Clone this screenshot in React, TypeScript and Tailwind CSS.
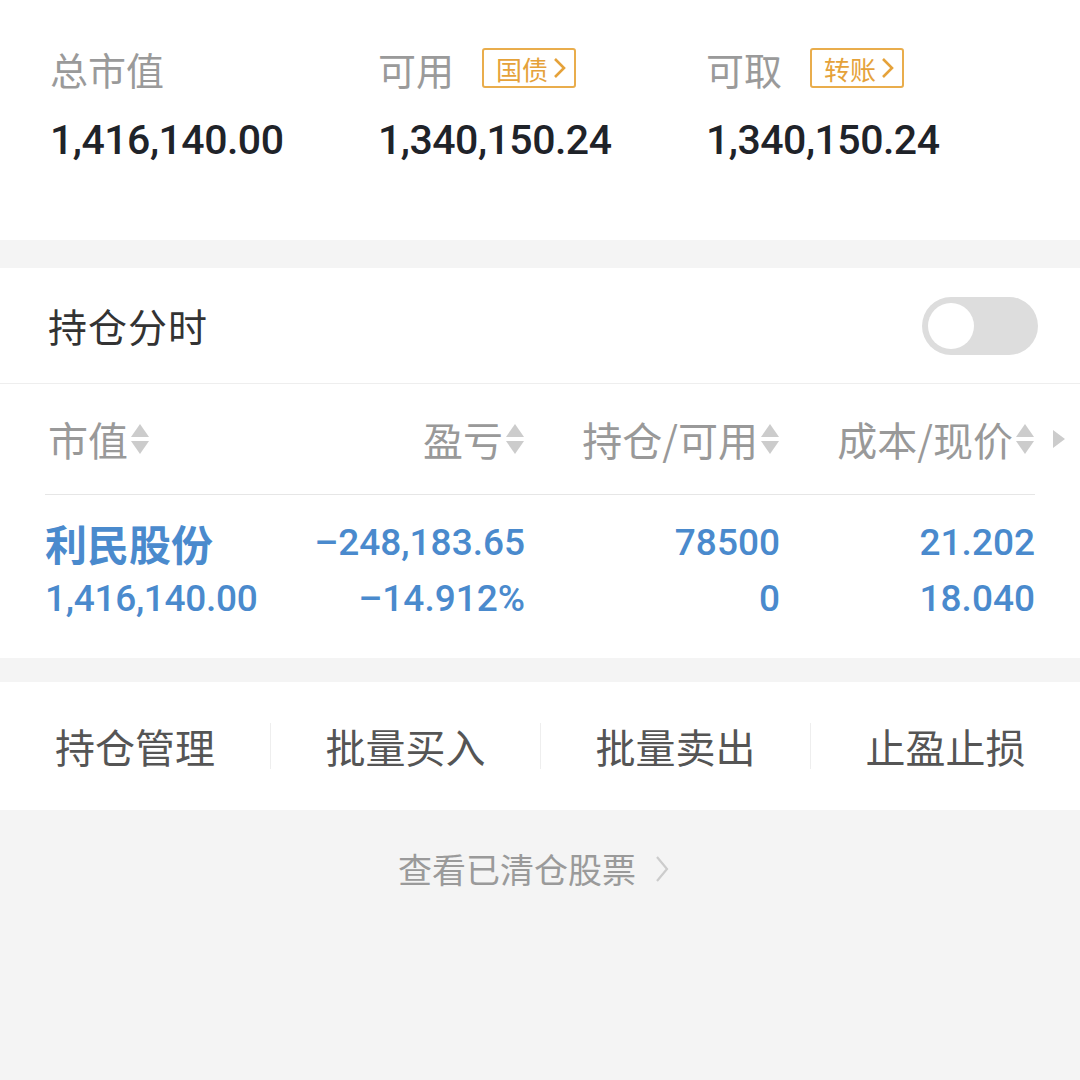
const SortIcon = () => (
  <svg width="20" height="32" viewBox="0 0 20 32" className="ml-[2px]">
    <path d="M10 1 L19 14 L1 14 Z" fill="#cccccc" />
    <path d="M1 18 L19 18 L10 31 Z" fill="#cccccc" />
  </svg>
);

const Badge = ({ text }: { text: string }) => (
  <span className="ml-[28px] inline-flex h-[40px] items-center rounded-[3px] border-2 border-[#e9ad4c] pl-[12px] pr-[6px] text-[26px] text-[#e5a23a]">
    {text}
    <svg width="18" height="24" viewBox="0 0 18 24" className="ml-[2px]">
      <path d="M5 3 L14 12 L5 21" fill="none" stroke="#e5a23a" strokeWidth="2.6" />
    </svg>
  </span>
);

const num = "font-['Roboto',sans-serif]";
const cjk = "font-['Noto_Sans_CJK_SC','Noto_Sans',sans-serif]";

export default function App() {
  const summary = [
    { label: "总市值", value: "1,416,140.00" },
    { label: "可用", value: "1,340,150.24", badge: "国债" },
    { label: "可取", value: "1,340,150.24", badge: "转账" },
  ];

  return (
    <div className={`min-h-[1080px] w-[1080px] bg-[#f4f4f4] ${cjk}`}>
      <section className="flex h-[240px] bg-white pl-[50px] pt-[48px]">
        {summary.map((s) => (
          <div key={s.label} className="w-[328px]">
            <div className="flex h-[40px] items-center text-[38px] text-[#9a9a9a]">
              {s.label}
              {s.badge && <Badge text={s.badge} />}
            </div>
            <div className={`mt-[30px] text-[41px] font-medium leading-[44px] tracking-[-0.5px] text-[#1f2329] ${num}`}>
              {s.value}
            </div>
          </div>
        ))}
      </section>

      <section className="mt-[28px] bg-white">
        <div className="flex h-[116px] items-center justify-between border-b border-[#eeeeee] pl-[48px] pr-[42px]">
          <span className="text-[39px] tracking-[1px] text-[#333333]">持仓分时</span>
          <div className="flex h-[58px] w-[116px] items-center rounded-full bg-[#dddddd] px-[6px]">
            <div className="h-[46px] w-[46px] rounded-full bg-white" />
          </div>
        </div>

        <div className="flex h-[110px] items-center pl-[48px] text-[40px] text-[#999999]">
          <div className="flex w-[240px] items-center">
            市值
            <SortIcon />
          </div>
          <div className="flex w-[237px] items-center justify-end">
            盈亏
            <SortIcon />
          </div>
          <div className="flex w-[255px] items-center justify-end">
            持仓/可用
            <SortIcon />
          </div>
          <div className="flex w-[255px] items-center justify-end">
            成本/现价
            <SortIcon />
          </div>
          <svg width="14" height="20" viewBox="0 0 14 20" className="ml-[17px]">
            <path d="M1 1 L13 10 L1 19 Z" fill="#cccccc" />
          </svg>
        </div>
        <div className="mx-[45px] h-px bg-[#e6e6e6]" />

        <div className="flex pb-[31px] pl-[45px] pt-[20px] text-[#4a8acd]">
          <div className="flex w-[242px] flex-col">
            <span className="h-[56px] text-[42px] font-bold leading-[56px]">利民股份</span>
            <span className={`h-[56px] text-[37px] font-medium leading-[56px] tracking-[-0.3px] ${num}`}>1,416,140.00</span>
          </div>
          {[
            ["–248,183.65", "–14.912%", "w-[238px]"],
            ["78500", "0", "w-[255px]"],
            ["21.202", "18.040", "w-[255px]"],
          ].map(([a, b, w]) => (
            <div key={a} className={`flex flex-col items-end ${w} ${num} text-[37px] font-medium`}>
              <span className="h-[56px] leading-[56px]">{a}</span>
              <span className="h-[56px] leading-[56px]">{b}</span>
            </div>
          ))}
        </div>
      </section>

      <section className="mt-[24px] grid h-[128px] grid-cols-4 bg-white">
        {["持仓管理", "批量买入", "批量卖出", "止盈止损"].map((t, i) => (
          <div key={t} className="flex items-center">
            {i > 0 && <div className="h-[46px] w-px bg-[#eeeeee]" />}
            <span className="flex-1 text-center text-[40px] text-[#555555]">{t}</span>
          </div>
        ))}
      </section>

      <div className="flex items-center justify-center pr-[10px] pt-[33px] text-[34px] text-[#9a9a9a]">
        查看已清仓股票
        <svg width="20" height="34" viewBox="0 0 20 34" className="ml-[16px]">
          <path d="M5 5 L15 17 L5 29" fill="none" stroke="#cccccc" strokeWidth="2.2" />
        </svg>
      </div>
    </div>
  );
}
